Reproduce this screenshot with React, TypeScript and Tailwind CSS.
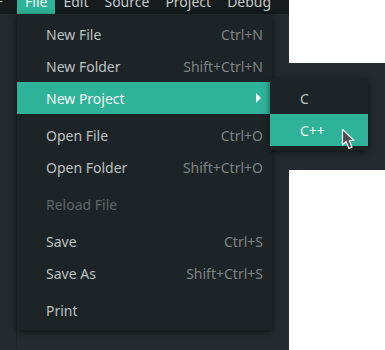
import React from 'react';

type Item = { label: string; shortcut?: string; disabled?: boolean; active?: boolean; sub?: boolean };

const groups: Item[][] = [
  [
    { label: 'New File', shortcut: 'Ctrl+N' },
    { label: 'New Folder', shortcut: 'Shift+Ctrl+N' },
    { label: 'New Project', active: true, sub: true },
  ],
  [
    { label: 'Open File', shortcut: 'Ctrl+O' },
    { label: 'Open Folder', shortcut: 'Shift+Ctrl+O' },
  ],
  [{ label: 'Reload File', disabled: true }],
  [
    { label: 'Save', shortcut: 'Ctrl+S' },
    { label: 'Save As', shortcut: 'Shift+Ctrl+S' },
  ],
  [{ label: 'Print' }],
];

const MenuRow: React.FC<{ item: Item }> = ({ item }) => {
  const bg = item.active ? 'bg-[#2eb39a]' : '';
  const color = item.disabled ? 'text-[#5d6668]' : item.active ? 'text-[#f2f5f4]' : 'text-[#bcc2c2]';
  return (
    <div className={`h-[32px] flex items-center justify-between pl-[29px] pr-[9px] ${bg}`}>
      <span className={color}>{item.label}</span>
      {item.shortcut && <span className="text-[#7b8586]">{item.shortcut}</span>}
      {item.sub && (
        <svg width="6" height="10" viewBox="0 0 6 10" className="mr-[1px]">
          <path d="M0 0 L5 5 L0 10 Z" fill="#f2f5f4" />
        </svg>
      )}
    </div>
  );
};

export default function App() {
  return (
    <div
      className="relative w-[385px] h-[350px] bg-white overflow-hidden text-[14px]"
      style={{ fontFamily: '"Noto Sans", "Open Sans", sans-serif' }}
    >
      {/* app window */}
      <div className="w-[289px] h-full bg-[#232b2e] flex flex-col">
        <div className="h-[14px] bg-[#161b1d] flex overflow-hidden text-[#c4c9c9]">
          <div className="w-[17px] h-full overflow-hidden">
            <span className="block -mt-[8px] leading-[20px] -ml-[5px]">+</span>
          </div>
          {['File', 'Edit', 'Source', 'Project', 'Debug'].map((m, i) => (
            <div key={m} className={`h-full px-[8px] ${i === 0 ? 'bg-[#2eb39a] text-[#f2f5f4]' : ''}`}>
              <span className="block -mt-[8px] leading-[20px]">{m}</span>
            </div>
          ))}
        </div>
        <div className="flex-1 border-l border-[#1e2528] ml-[16px]" />
      </div>

      {/* submenu backdrop */}
      <div className="absolute left-[289px] top-[63px] w-[96px] h-[107px] bg-[#232b2e]" />

      {/* File menu */}
      <div className="absolute left-[17px] top-[14px] w-[255px] h-[316px] bg-[#1d2427] pt-[4px] shadow-[0_2px_6px_rgba(0,0,0,0.55)]">
        {groups.map((g, gi) => (
          <div key={gi} className={gi > 0 ? 'mt-[5px]' : ''}>
            {g.map((it) => (
              <MenuRow key={it.label} item={it} />
            ))}
          </div>
        ))}
      </div>

      {/* New Project submenu */}
      <div className="absolute left-[270px] top-[78px] w-[98px] py-[4px] bg-[#1d2427] shadow-[0_2px_6px_rgba(0,0,0,0.55)]">
        <div className="h-[32px] flex items-center pl-[30px] text-[#bcc2c2]">C</div>
        <div className="h-[32px] flex items-center pl-[30px] bg-[#2eb39a] text-[#f2f5f4]">C++</div>
      </div>

      {/* mouse pointer */}
      <svg className="absolute left-[341px] top-[128px]" width="16" height="24" viewBox="0 0 16 24">
        <path
          d="M1.5 1.5 L1.5 17 L5 13.5 L8 20.5 L11 19.2 L8.2 12.5 L13 12.5 Z"
          fill="#4b4b4b"
          stroke="#f2f2f2"
          strokeWidth="1.2"
          strokeLinejoin="round"
        />
      </svg>
    </div>
  );
}
